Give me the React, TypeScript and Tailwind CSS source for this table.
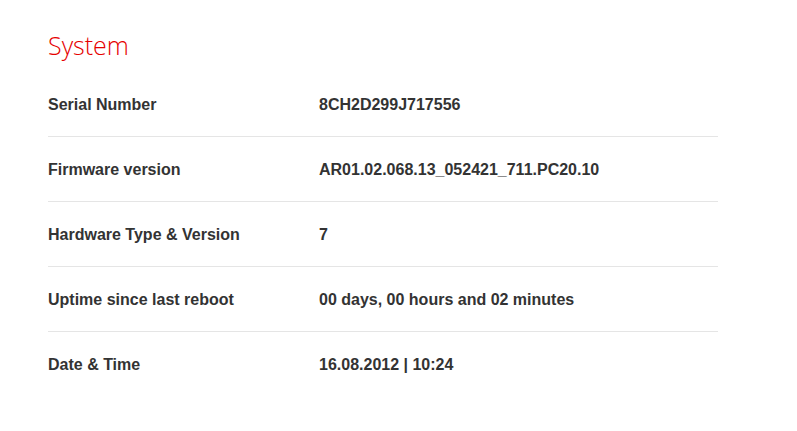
import React from "react";

const rows: [string, string][] = [
  ["Serial Number", "8CH2D299J717556"],
  ["Firmware version", "AR01.02.068.13_052421_711.PC20.10"],
  ["Hardware Type & Version", "7"],
  ["Uptime since last reboot", "00 days, 00 hours and 02 minutes"],
  ["Date & Time", "16.08.2012 | 10:24"],
];

export default function App() {
  return (
    <div className="min-h-[431px] w-[797px] bg-white pl-[48px] pt-[29px]" style={{ fontFamily: '"Liberation Sans", Arial, sans-serif' }}>
      <h1
        className="text-[25px] leading-[32px] font-light text-[#e60000] mb-[11px]"
        style={{ fontFamily: '"Open Sans", sans-serif' }}
      >
        System
      </h1>
      <div className="w-[670px]">
        {rows.map(([k, v], i) => (
          <div
            key={k}
            className={
              "flex pt-[21px] pb-[19px] text-[16px] leading-[24px] font-bold text-[#333333] " +
              (i < rows.length - 1 ? "border-b border-[#e5e5e5]" : "")
            }
          >
            <div className="w-[271px] shrink-0">{k}</div>
            <div>{v}</div>
          </div>
        ))}
      </div>
    </div>
  );
}
